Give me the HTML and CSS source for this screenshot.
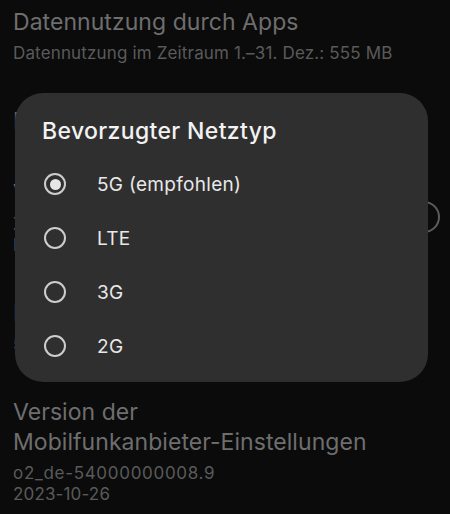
FILE: index.html
```html
<!DOCTYPE html>
<html lang="de">
<head>
<meta charset="utf-8">
<link rel="stylesheet" href="styles.css">
</head>
<body>
<div class="page">
  <div class="list">
    <div class="item">
      <div class="title">Datennutzung durch Apps</div>
      <div class="sub">Datennutzung im Zeitraum 1.–31. Dez.: 555 MB</div>
    </div>
    <div class="item">
      <div class="title">D</div>
    </div>
    <div class="item item-switch">
      <div class="item-text">
        <div class="title">V</div>
        <div class="sub">Z<br>K</div>
      </div>
      <div class="switch"><div class="thumb"></div></div>
    </div>
    <div class="item">
      <div class="title">B</div>
      <div class="sub">5</div>
    </div>
    <div class="item">
      <div class="title">Version der<br>Mobilfunkanbieter-Einstellungen</div>
      <div class="sub"><span class="build">o2_de-54000000008.9</span><br>2023-10-26</div>
    </div>
  </div>

  <div class="dialog">
    <div class="dialog-title">Bevorzugter Netztyp</div>
    <div class="options">
      <div class="option"><span class="radio checked"></span><span class="label">5G (empfohlen)</span></div>
      <div class="option"><span class="radio"></span><span class="label">LTE</span></div>
      <div class="option"><span class="radio"></span><span class="label">3G</span></div>
      <div class="option"><span class="radio"></span><span class="label">2G</span></div>
    </div>
  </div>
</div>
</body>
</html>
```

FILE: styles.css
```css
html, body {
  margin: 0;
  padding: 0;
  background: #0b0b0b;
}
body {
  width: 450px;
  height: 514px;
  overflow: hidden;
  font-family: Inter, Roboto, sans-serif;
}
.page {
  position: relative;
  height: 514px;
}
.list {
  display: flex;
  flex-direction: column;
  gap: 42px;
  padding: 6.5px 10px 0 13px;
}
.item-switch {
  display: flex;
  align-items: center;
  justify-content: space-between;
}
.title {
  font-size: 23px;
  line-height: 30px;
  letter-spacing: 0.05px;
  color: #6e6e6e;
  white-space: nowrap;
}
.sub {
  margin-top: 6px;
  font-size: 17px;
  line-height: 21px;
  letter-spacing: 0.15px;
  color: #5a5a5a;
  white-space: nowrap;
}
.build {
  letter-spacing: 0.7px;
}
.switch {
  box-sizing: border-box;
  width: 52px;
  height: 32px;
  border: 2px solid #5c5c5c;
  border-radius: 16px;
  display: flex;
  align-items: center;
  padding-left: 6px;
  flex-shrink: 0;
}
.thumb {
  width: 16px;
  height: 16px;
  border-radius: 50%;
  background: #5c5c5c;
}
.dialog {
  position: absolute;
  left: 15px;
  top: 93px;
  width: 413px;
  height: 289px;
  box-sizing: border-box;
  background: #2f2f2f;
  border-radius: 28px;
  padding: 24px 0 0 0;
}
.dialog-title {
  padding-left: 27px;
  font-size: 23px;
  line-height: 28px;
  font-weight: 500;
  letter-spacing: 0.35px;
  color: #f2f2f2;
}
.options {
  margin-top: 12px;
  display: flex;
  flex-direction: column;
}
.option {
  height: 54px;
  display: flex;
  align-items: center;
  padding-left: 29px;
}
.radio {
  box-sizing: border-box;
  width: 22px;
  height: 22px;
  border: 2px solid #cdcdcd;
  border-radius: 50%;
  display: flex;
  align-items: center;
  justify-content: center;
  flex-shrink: 0;
}
.radio.checked::after {
  content: "";
  width: 11px;
  height: 11px;
  border-radius: 50%;
  background: #e6e6e6;
}
.label {
  margin-left: 31px;
  font-size: 19px;
  letter-spacing: 0.3px;
  color: #e8e8e8;
}
```
